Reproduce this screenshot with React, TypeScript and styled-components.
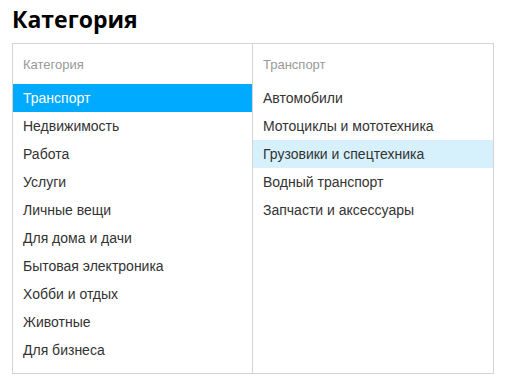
import React from 'react';
import styled, { createGlobalStyle } from 'styled-components';

const GlobalStyle = createGlobalStyle`
  html, body {
    margin: 0;
    padding: 0;
    background: #fff;
  }
  body {
    font-family: 'Liberation Sans', Arial, sans-serif;
  }
`;

const Page = styled.div`
  width: 525px;
  height: 391px;
  padding: 0 12px;
  box-sizing: border-box;
`;

const Title = styled.h1`
  margin: 0;
  padding-top: 4px;
  height: 43px;
  box-sizing: border-box;
  font-family: 'Open Sans', sans-serif;
  font-size: 23px;
  font-weight: 700;
  line-height: 30px;
  color: #000;
`;

const Panel = styled.div`
  display: grid;
  grid-template-columns: 240px 240px;
  width: 482px;
  height: 331px;
  box-sizing: border-box;
  border: 1px solid #d4d4d4;
`;

const Column = styled.div<{ $divider?: boolean }>`
  display: flex;
  flex-direction: column;
  border-right: ${(p) => (p.$divider ? '1px solid #d4d4d4' : 'none')};
`;

const Header = styled.div`
  height: 40px;
  padding: 0 10px;
  display: flex;
  align-items: center;
  font-size: 13px;
  color: #999;
`;

const Item = styled.div<{ $state?: 'active' | 'hover' }>`
  height: 28px;
  padding: 0 10px;
  display: flex;
  align-items: center;
  font-size: 14px;
  color: ${(p) => (p.$state === 'active' ? '#fff' : '#333')};
  background: ${(p) =>
    p.$state === 'active' ? '#00aaff' : p.$state === 'hover' ? '#d6f1fc' : 'transparent'};
`;

const categories = [
  'Транспорт',
  'Недвижимость',
  'Работа',
  'Услуги',
  'Личные вещи',
  'Для дома и дачи',
  'Бытовая электроника',
  'Хобби и отдых',
  'Животные',
  'Для бизнеса',
];

const transport = [
  'Автомобили',
  'Мотоциклы и мототехника',
  'Грузовики и спецтехника',
  'Водный транспорт',
  'Запчасти и аксессуары',
];

export default function App() {
  return (
    <Page>
      <GlobalStyle />
      <Title>Категория</Title>
      <Panel>
        <Column $divider>
          <Header>Категория</Header>
          {categories.map((c, i) => (
            <Item key={c} $state={i === 0 ? 'active' : undefined}>
              {c}
            </Item>
          ))}
        </Column>
        <Column>
          <Header>Транспорт</Header>
          {transport.map((t, i) => (
            <Item key={t} $state={i === 2 ? 'hover' : undefined}>
              {t}
            </Item>
          ))}
        </Column>
      </Panel>
    </Page>
  );
}
